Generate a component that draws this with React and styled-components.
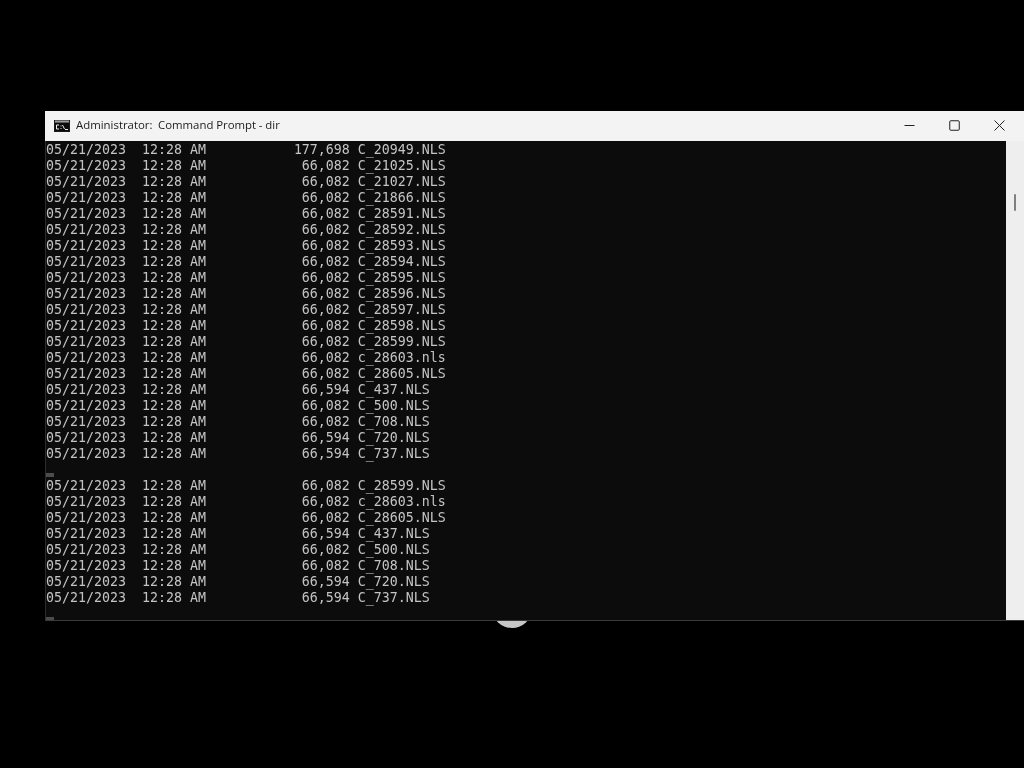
import React from "react";
import styled, { createGlobalStyle } from "styled-components";

const Global = createGlobalStyle`
  html, body { margin: 0; padding: 0; background: #000; overflow: hidden; }
  #root { width: 1024px; height: 768px; }
`;
const Desktop = styled.div`
  width: 1024px; height: 768px; box-sizing: border-box;
  background: #000; padding: 111px 0 0 45px; position: relative;
`;
const Disc = styled.div`
  position: absolute; left: 492px; top: 588px; width: 40px; height: 40px;
  background: #c6c6c6; border-radius: 50%;
`;
const Window = styled.div`
  width: 979px; height: 510px; display: flex; flex-direction: column;
  position: relative; z-index: 1;
`;
const TitleBar = styled.div`
  height: 30px; flex: none; background: #f3f3f3; display: flex; align-items: center;
  padding-left: 9px; color: #1c1c1c; will-change: transform;
`;
const AppIcon = styled.svg`
  width: 16px; height: 12px; margin-right: 6px; flex: none; display: block;
`;
const Title = styled.span`
  flex: 1; white-space: pre; font-family: "Open Sans", "Noto Sans", sans-serif; font-size: 11.4px;
  line-height: 28px; height: 30px; box-sizing: border-box; word-spacing: -0.2px;
`;
const Controls = styled.div`display: flex; align-items: center; height: 100%; padding-right: 2px;`;
const Control = styled.div`
  width: 45px; height: 100%; display: flex; align-items: center; justify-content: center;
  padding-bottom: 2px; box-sizing: border-box;
  svg { width: 11px; height: 11px; display: block; }
`;
const Body = styled.div`flex: 1; display: flex; min-height: 0;`;
const Console = styled.div`
  flex: 1; background: #0c0c0c; color: #c4c4c4; overflow: hidden;
  font: 13.29px/16px "DejaVu Sans Mono", monospace;
  border-left: 1px solid #2c2c2c; border-bottom: 1px solid #3a3a3a; box-sizing: border-box;
  will-change: transform;
`;
const Line = styled.div`height: 16px; white-space: pre; line-height: 18px;`;
const CursorLine = styled.div`height: 16px; display: flex; align-items: flex-end;`;
const Cursor = styled.div`width: 8px; height: 4px; background: #4c4c4c;`;
const Scrollbar = styled.div`
  width: 18px; background: #eeeeee; flex: none; position: relative; box-sizing: border-box;
  border-bottom: 1px solid #3a3a3a;
`;
const Thumb = styled.div`
  position: absolute; left: 8px; top: 53px; width: 2px; height: 17px;
  background: #808080; border-radius: 1px;
`;

const row = (size, name) => `05/21/2023  12:28 AM    ${size.padStart(14)} ${name}`;
const first = [
  ["177,698", "C_20949.NLS"], ["66,082", "C_21025.NLS"], ["66,082", "C_21027.NLS"],
  ["66,082", "C_21866.NLS"], ["66,082", "C_28591.NLS"], ["66,082", "C_28592.NLS"],
  ["66,082", "C_28593.NLS"], ["66,082", "C_28594.NLS"], ["66,082", "C_28595.NLS"],
  ["66,082", "C_28596.NLS"], ["66,082", "C_28597.NLS"], ["66,082", "C_28598.NLS"],
  ["66,082", "C_28599.NLS"], ["66,082", "c_28603.nls"], ["66,082", "C_28605.NLS"],
  ["66,594", "C_437.NLS"], ["66,082", "C_500.NLS"], ["66,082", "C_708.NLS"],
  ["66,594", "C_720.NLS"], ["66,594", "C_737.NLS"],
];
const second = [
  ["66,082", "C_28599.NLS"], ["66,082", "c_28603.nls"], ["66,082", "C_28605.NLS"],
  ["66,594", "C_437.NLS"], ["66,082", "C_500.NLS"], ["66,082", "C_708.NLS"],
  ["66,594", "C_720.NLS"], ["66,594", "C_737.NLS"],
];

export default function App() {
  return (
    <Desktop>
      <Global />
      <Disc />
      <Window>
        <TitleBar>
          <AppIcon viewBox="0 0 16 12">
            <rect width="16" height="12" fill="#1a1a1a" />
            <rect x="1" y="0.5" width="14" height="2" fill="#9a9a9a" />
            <rect x="1" y="3" width="14" height="8" fill="#0a0a0a" />
            <path d="M5 5H2.5V9H5M7 5.5v.9M7 8v.9M8.5 5L10.5 9M11 9.5h3" stroke="#eee" strokeWidth="1" fill="none" />
          </AppIcon>
          <Title>{"Administrator:  Command Prompt - dir"}</Title>
          <Controls>
            <Control>
              <svg viewBox="0 0 11 11"><path d="M0.5 5.5H10.5" stroke="#222" strokeWidth="1" /></svg>
            </Control>
            <Control>
              <svg viewBox="0 0 11 11"><rect x="0.75" y="0.75" width="9.5" height="9.5" rx="1" fill="none" stroke="#222" strokeWidth="1" /></svg>
            </Control>
            <Control>
              <svg viewBox="0 0 11 11"><path d="M0.5 0.5L10.5 10.5M10.5 0.5L0.5 10.5" stroke="#222" strokeWidth="1" /></svg>
            </Control>
          </Controls>
        </TitleBar>
        <Body>
          <Console>
            {first.map(([s, n], i) => <Line key={i}>{row(s, n)}</Line>)}
            <CursorLine><Cursor /></CursorLine>
            {second.map(([s, n], i) => <Line key={i}>{row(s, n)}</Line>)}
            <CursorLine><Cursor /></CursorLine>
          </Console>
          <Scrollbar><Thumb /></Scrollbar>
        </Body>
      </Window>
    </Desktop>
  );
}
